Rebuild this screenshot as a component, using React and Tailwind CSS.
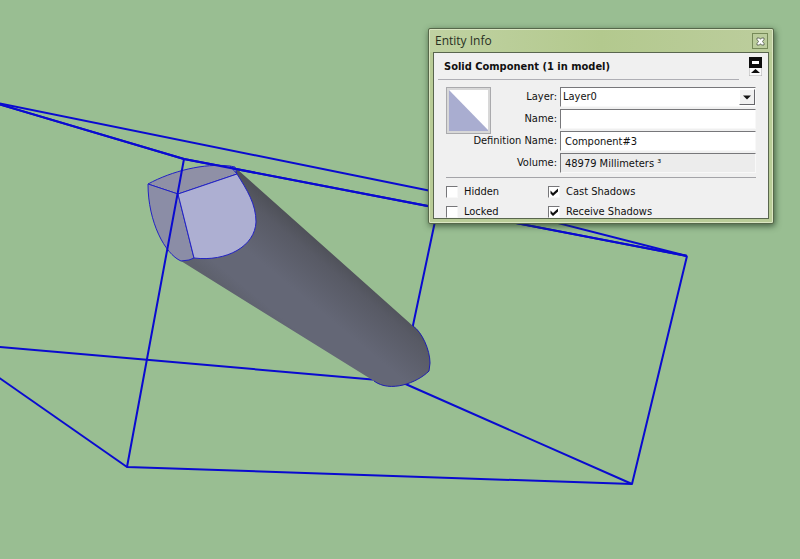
import React, { useState } from 'react'
import clsx from 'clsx'

const edges = [
  '-12,101 184,159 687,256',
  '-12,101 441,193 687,256',
  '441,193 401,382 632,484',
  '-12,346 401,382',
  '-12,370 127,467',
]

const frontEdges = [
  '184,159 127,467 632,484 687,256',
  '-12,101 184,159 687,256',
]

function Wires({ lines }) {
  return (
    <g fill="none" stroke="#0a0ad0" strokeWidth="2" strokeLinejoin="round">
      {lines.map((points) => (
        <polyline key={points} points={points} />
      ))}
    </g>
  )
}

function Model() {
  return (
    <svg
      className="block h-screen w-full"
      viewBox="0 0 800 559"
      preserveAspectRatio="xMinYMin slice"
      aria-hidden="true"
    >
      <defs>
        <linearGradient
          id="shaft"
          gradientUnits="userSpaceOnUse"
          x1="330"
          y1="250"
          x2="268"
          y2="325"
        >
          <stop offset="0" stopColor="#4f5159" />
          <stop offset="0.15" stopColor="#585a65" />
          <stop offset="0.55" stopColor="#646776" />
          <stop offset="0.85" stopColor="#646776" />
          <stop offset="1" stopColor="#5e616d" />
        </linearGradient>
      </defs>

      <Wires lines={edges} />

      <path
        d="M237,169 L413,326 C422,332 430,350 430,363 L429,371 C417,383 390,393 374,381 L181,261 Z"
        fill="url(#shaft)"
      />
      <path
        d="M413,326 C422,332 430,350 430,363 L429,371 C417,383 390,393 374,381"
        fill="none"
        stroke="#1c1cb0"
      />

      <g stroke="#2222c4" strokeLinejoin="round">
        <path
          d="M148,184 C172,171 204,163 230,166 L237,174 L178,194 Z"
          fill="#8f90a6"
        />
        <path
          d="M148,184 L178,194 L194,258 L189,260 L181,261 C165,254 148,222 148,184 Z"
          fill="#8b8da6"
        />
        <path
          d="M178,194 L237,174 C247,190 256,204 256,222 C255,246 227,262 194,258 Z"
          fill="#adafd2"
        />
        <path d="M230,166 L235,167 L237,174" fill="none" />
      </g>

      <Wires lines={frontEdges} />
    </svg>
  )
}

const sunken = 'border border-[#f8f8f8] border-t-[#77777a] border-l-[#77777a]'

function Field({ id, label, children }) {
  return (
    <>
      <label htmlFor={id} className="text-right leading-5 whitespace-nowrap">
        {label}
      </label>
      {children}
    </>
  )
}

function Check({ label, defaultChecked }) {
  return (
    <label className="flex h-5 items-center gap-1.5">
      <span className="relative h-3 w-3">
        <input
          type="checkbox"
          defaultChecked={defaultChecked}
          className={clsx('peer block h-3 w-3 appearance-none bg-white', sunken)}
        />
        <svg
          viewBox="0 0 12 12"
          className="pointer-events-none absolute inset-0 hidden h-3 w-3 peer-checked:block"
        >
          <path d="M2.5,4.5 L5,7 L10,2.5 V5.5 L5,10 L2.5,7.5 Z" fill="#111" />
        </svg>
      </span>
      {label}
    </label>
  )
}

function EntityInfo() {
  const [name, setName] = useState('')
  const [definition, setDefinition] = useState('Component#3')
  const input = clsx('h-5 w-full min-w-0 px-1', sunken)

  return (
    <section className="absolute top-7 left-[428px] w-[346px] rounded-xs border border-[#56684a] bg-[#b9cc97] px-1 pb-1 shadow-[1px_2px_6px_rgba(30,50,30,0.7)] inset-ring inset-ring-[#dbe7c3]">
      <header className="-mx-[3px] mt-px flex h-[22px] items-center justify-between bg-linear-to-r from-[#c0d2a2] via-[#b3c98e] to-[#bccd9d] pr-1 pl-[5px]">
        <h1 className="font-['Open_Sans',sans-serif] text-[12px] text-[#29301f]">
          Entity Info
        </h1>
        <button
          aria-label="Close"
          className="flex h-4 w-4 items-center justify-center border border-[#768a58]"
        >
          <svg viewBox="0 0 9 9" className="h-[9px] w-[9px]">
            <path
              d="M1,1 H3.5 L4.5,2.3 L5.5,1 H8 V2.5 L6.5,4.5 L8,6.5 V8 H5.5 L4.5,6.7 L3.5,8 H1 V6.5 L2.5,4.5 L1,2.5 Z"
              fill="#fff"
              stroke="#4d5546"
              strokeWidth="0.8"
            />
          </svg>
        </button>
      </header>

      <div className="overflow-hidden border border-[#59664e] bg-[#f0f0f0] px-3 text-[11px] text-[#111]">
        <div className="-mr-2 -ml-2 flex h-[34px] items-start justify-between pt-1">
          <h2 className="mr-2.5 grow border-b border-[#aeaeb4] pt-0.5 pb-1 pl-1.5 leading-4 font-bold">
            Solid Component (1 in model)
          </h2>
          <button aria-label="Hide details" className="mr-0.5">
            <svg viewBox="0 0 13 19" className="h-[19px] w-[13px]">
              <rect width="13" height="19" fill="#fafafa" stroke="#a8a8a8" />
              <rect width="13" height="11" fill="#0c0c0c" />
              <rect x="3" y="4" width="7" height="3" fill="#fff" />
              <path d="M2,16 L6.5,12 L11,16 Z" fill="#0c0c0c" />
            </svg>
          </button>
        </div>

        <div className="flex items-start">
          <div className="shrink-0 border border-[#aaaaad] bg-[#d8d8d8] p-0.5">
            <svg viewBox="0 0 39 41" className="h-[41px] w-[39px]">
              <rect width="39" height="41" fill="#fff" />
              <path d="M0,0 L39,40 V41 H0 Z" fill="#a9add0" />
            </svg>
          </div>
          <div className="-ml-5 grid grow grid-cols-[auto_196px] justify-end gap-x-[3px] gap-y-0.5">
            <Field id="layer" label="Layer:">
              <div className="relative">
                <select
                  id="layer"
                  className={clsx(
                    'block h-5 w-full appearance-none bg-white px-0.5',
                    sunken
                  )}
                >
                  <option>Layer0</option>
                </select>
                <span className="pointer-events-none absolute top-0.5 right-px flex h-4 w-4 items-center justify-center border border-white border-r-[#66666a] border-b-[#66666a] bg-[#f0f0f0]">
                  <svg viewBox="0 0 8 5" className="h-[5px] w-2">
                    <path d="M0,0.5 H8 L4,4.5 Z" fill="#111" />
                  </svg>
                </span>
              </div>
            </Field>
            <Field id="name" label="Name:">
              <input
                id="name"
                value={name}
                onChange={(e) => setName(e.target.value)}
                className={clsx(input, 'bg-white')}
              />
            </Field>
            <Field id="definition" label="Definition Name:">
              <input
                id="definition"
                value={definition}
                onChange={(e) => setDefinition(e.target.value)}
                className={clsx(input, 'bg-white')}
              />
            </Field>
            <Field id="volume" label="Volume:">
              <input
                id="volume"
                readOnly
                value="48979 Millimeters ³"
                className={clsx(input, 'bg-[#ececec]')}
              />
            </Field>
          </div>
        </div>

        <div className="mt-1 -mb-1 grid grid-cols-[102px_auto] border-t border-[#a4a4a8] pt-1">
          <Check label="Hidden" />
          <Check label="Cast Shadows" defaultChecked />
          <Check label="Locked" />
          <Check label="Receive Shadows" defaultChecked />
        </div>
      </div>
    </section>
  )
}

export default function App() {
  return (
    <main className="relative min-h-screen overflow-hidden bg-[#99be92] font-['DejaVu_Sans_Condensed','DejaVu_Sans',sans-serif]">
      <Model />
      <EntityInfo />
    </main>
  )
}
